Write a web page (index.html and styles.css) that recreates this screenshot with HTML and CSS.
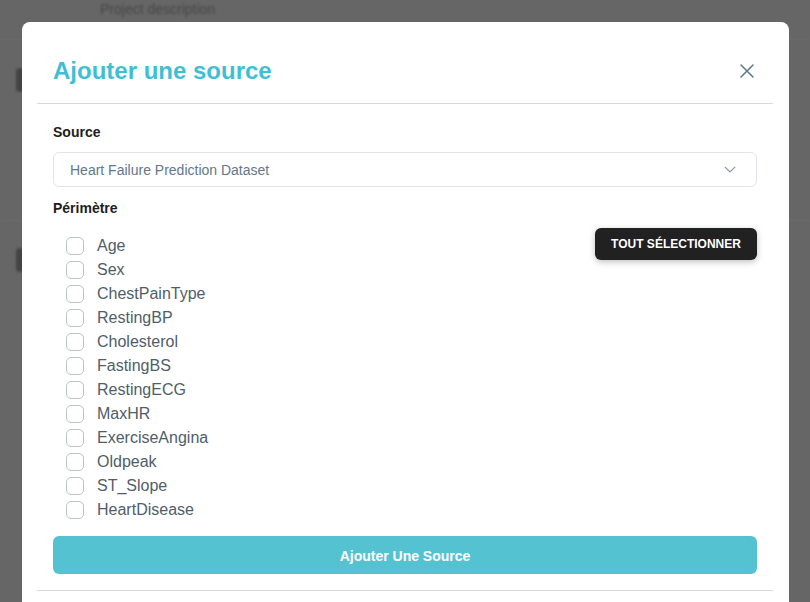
FILE: index.html
```html
<!DOCTYPE html>
<html lang="fr">
<head>
<meta charset="utf-8">
<title>Ajouter une source</title>
<link rel="stylesheet" href="styles.css">
</head>
<body>
<div class="backdrop">
  <div class="bg-top"><span class="bg-text">Project description</span></div>
  <div class="bg-blob bg-blob-1"></div>
  <div class="bg-line bg-line-1"></div>
  <div class="bg-blob bg-blob-2"></div>
</div>
<div class="modal">
  <div class="modal-header">
    <h2 class="modal-title">Ajouter une source</h2>
    <button class="close-btn" aria-label="Fermer">
      <svg width="14" height="14" viewBox="0 0 14 14"><path d="M1 1L13 13M13 1L1 13" stroke="#5f7684" stroke-width="1.5" fill="none" stroke-linecap="round"/></svg>
    </button>
  </div>
  <div class="modal-body">
    <div class="field-label">Source</div>
    <div class="select">
      <span class="select-value">Heart Failure Prediction Dataset</span>
      <svg class="chevron" width="12" height="7" viewBox="0 0 12 7"><path d="M0.8 0.8L6 6L11.2 0.8" stroke="#8795a6" stroke-width="1.2" fill="none"/></svg>
    </div>
    <div class="field-label perimetre">Périmètre</div>
    <div class="scope-row">
      <ul class="check-list">
        <li class="check-item"><span class="box"></span><span class="check-label">Age</span></li>
        <li class="check-item"><span class="box"></span><span class="check-label">Sex</span></li>
        <li class="check-item"><span class="box"></span><span class="check-label">ChestPainType</span></li>
        <li class="check-item"><span class="box"></span><span class="check-label">RestingBP</span></li>
        <li class="check-item"><span class="box"></span><span class="check-label">Cholesterol</span></li>
        <li class="check-item"><span class="box"></span><span class="check-label">FastingBS</span></li>
        <li class="check-item"><span class="box"></span><span class="check-label">RestingECG</span></li>
        <li class="check-item"><span class="box"></span><span class="check-label">MaxHR</span></li>
        <li class="check-item"><span class="box"></span><span class="check-label">ExerciseAngina</span></li>
        <li class="check-item"><span class="box"></span><span class="check-label">Oldpeak</span></li>
        <li class="check-item"><span class="box"></span><span class="check-label">ST_Slope</span></li>
        <li class="check-item"><span class="box"></span><span class="check-label">HeartDisease</span></li>
      </ul>
      <button class="select-all">TOUT SÉLECTIONNER</button>
    </div>
    <button class="submit">Ajouter Une Source</button>
  </div>
  <div class="modal-footer"></div>
</div>
</body>
</html>
```
FILE: styles.css
```css
* { box-sizing: border-box; }
html, body {
  margin: 0;
  padding: 0;
  width: 810px;
  height: 602px;
  overflow: hidden;
  background: #666666;
  font-family: "Liberation Sans", Arial, sans-serif;
}
.backdrop {
  width: 810px;
  height: 602px;
  filter: blur(1.2px);
}
.bg-top {
  height: 40px;
  padding: 0 0 0 100px;
  border-bottom: 1px solid #6e6e6e;
}
.bg-text {
  display: block;
  padding-top: 1px;
  color: #474747;
  font-size: 14px;
  line-height: 16px;
}
.bg-line { height: 1px; background: #707070; }
.bg-line-1 { margin-top: 128px; }
.bg-blob {
  width: 8px;
  height: 24px;
  background: #444444;
  margin-left: 16px;
  border-radius: 4px;
}
.bg-blob-1 { margin-top: 28px; }
.bg-blob-2 { margin-top: 27px; }

.modal {
  position: absolute;
  left: 22px;
  top: 22px;
  width: 767px;
  height: 600px;
  background: #ffffff;
  border-radius: 8px 8px 0 0;
}
.modal-header {
  margin: 0 16px 0 15px;
  padding: 35px 18px 18px 16px;
  border-bottom: 1px solid #d5d8dc;
  display: flex;
  align-items: center;
  justify-content: space-between;
}
.modal-title {
  margin: 0;
  font-size: 24px;
  line-height: 28px;
  font-weight: bold;
  color: #3fbfd5;
}
.close-btn {
  border: 0;
  background: none;
  padding: 0;
  width: 14px;
  height: 14px;
  display: flex;
  margin-right: 1px;
}
.modal-body {
  padding: 18px 32px 0 31px;
}
.field-label {
  font-size: 14px;
  line-height: 20px;
  font-weight: bold;
  color: #1e1e1e;
}
.select {
  margin-top: 10px;
  height: 35px;
  border: 1px solid #e1e4ee;
  border-radius: 6px;
  display: flex;
  align-items: center;
  justify-content: space-between;
  padding: 0 20px 0 16px;
}
.select-value {
  font-size: 14px;
  color: #62788a;
}
.chevron { display: block; }
.perimetre { margin-top: 11px; }
.scope-row {
  margin-top: 10px;
  display: flex;
  justify-content: space-between;
  align-items: flex-start;
}
.check-list {
  list-style: none;
  margin: 0;
  padding: 6px 0 0 13px;
}
.check-item {
  height: 24px;
  display: flex;
  align-items: center;
  gap: 13px;
}
.box {
  width: 18px;
  height: 18px;
  border: 1px solid #bcc3ca;
  border-radius: 5px;
  background: #fff;
}
.check-label {
  font-size: 16px;
  color: #4f5e69;
}
.select-all {
  height: 32px;
  width: 162px;
  border: 0;
  border-radius: 6px;
  background: #212121;
  color: #ffffff;
  font-family: "Liberation Sans", Arial, sans-serif;
  font-size: 12px;
  font-weight: bold;
  box-shadow: 0 2px 6px rgba(0,0,0,0.25);
  padding: 0;
}
.submit {
  display: block;
  margin-top: 14px;
  width: 100%;
  height: 38px;
  padding-top: 2px;
  border: 0;
  border-radius: 6px;
  background: #55c2d2;
  color: #ffffff;
  font-family: "Liberation Sans", Arial, sans-serif;
  font-size: 14px;
  font-weight: bold;
}
.modal-footer {
  margin: 16px 16px 0 15px;
  border-top: 1px solid #d5d8dc;
}
```
